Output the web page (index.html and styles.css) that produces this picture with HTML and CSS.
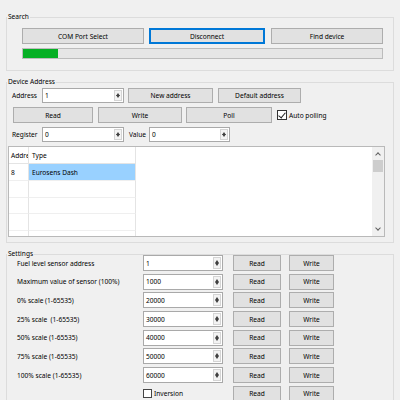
FILE: index.html
```html
<!DOCTYPE html>
<html lang="en">
<head>
    <meta charset="UTF-8">
    <meta name="viewport" content="width=device-width, initial-scale=1.0">
    <title>Sensor Configurator</title>
    <link rel="stylesheet" href="styles.css">
</head>
<body>
    <div class="window">
        <fieldset class="group search">
            <legend>Search</legend>
            <div class="search-body">
                <div class="row">
                    <button class="btn w-com">COM Port Select</button>
                    <button class="btn w-disc focused">Disconnect</button>
                    <button class="btn w-find">Find device</button>
                </div>
                <div class="progress"><div class="progress-fill" style="width: 35px"></div></div>
            </div>
        </fieldset>

        <fieldset class="group device">
            <legend>Device Address</legend>
            <div class="device-body">
                <div class="row">
                    <span class="label w-lbl">Address</span>
                    <div class="spin w-addr"><span>1</span><div class="arrows"></div></div>
                    <button class="btn w-new">New address</button>
                    <button class="btn w-def">Default address</button>
                </div>
                <div class="row row-actions">
                    <button class="btn w-read">Read</button>
                    <button class="btn w-write">Write</button>
                    <button class="btn w-poll">Poll</button>
                    <label class="check"><span class="box checked"></span>Auto polling</label>
                </div>
                <div class="row row-reg">
                    <span class="label w-lbl">Register</span>
                    <div class="spin w-addr"><span>0</span><div class="arrows"></div></div>
                    <span class="label w-val">Value</span>
                    <div class="spin w-value"><span>0</span><div class="arrows"></div></div>
                </div>
                <div class="table">
                    <div class="table-grid">
                        <div class="cell head c1">Addre</div>
                        <div class="cell head c2">Type</div>
                        <div class="cell c1">8</div>
                        <div class="cell c2 selected">Eurosens Dash</div>
                        <div class="cell c1"></div><div class="cell c2"></div>
                        <div class="cell c1"></div><div class="cell c2"></div>
                        <div class="cell c1"></div><div class="cell c2"></div>
                        <div class="cell c1 last"></div><div class="cell c2 last"></div>
                    </div>
                    <div class="scrollbar">
                        <span class="chev up"></span>
                        <span class="thumb"></span>
                        <span class="chev down"></span>
                    </div>
                </div>
            </div>
        </fieldset>

        <fieldset class="group settings">
            <legend>Settings</legend>
            <div class="settings-body">
                <span class="label">Fuel level sensor address</span>
                <div class="spin"><span>1</span><div class="arrows"></div></div>
                <button class="btn read">Read</button>
                <button class="btn write">Write</button>

                <span class="label">Maximum value of sensor (100%)</span>
                <div class="spin"><span>1000</span><div class="arrows"></div></div>
                <button class="btn read">Read</button>
                <button class="btn write">Write</button>

                <span class="label">0% scale (1-65535)</span>
                <div class="spin"><span>20000</span><div class="arrows"></div></div>
                <button class="btn read">Read</button>
                <button class="btn write">Write</button>

                <span class="label">25% scale&nbsp; (1-65535)</span>
                <div class="spin"><span>30000</span><div class="arrows"></div></div>
                <button class="btn read">Read</button>
                <button class="btn write">Write</button>

                <span class="label">50% scale (1-65535)</span>
                <div class="spin"><span>40000</span><div class="arrows"></div></div>
                <button class="btn read">Read</button>
                <button class="btn write">Write</button>

                <span class="label">75% scale (1-65535)</span>
                <div class="spin"><span>50000</span><div class="arrows"></div></div>
                <button class="btn read">Read</button>
                <button class="btn write">Write</button>

                <span class="label">100% scale (1-65535)</span>
                <div class="spin"><span>60000</span><div class="arrows"></div></div>
                <button class="btn read">Read</button>
                <button class="btn write">Write</button>

                <span class="label"></span>
                <label class="check"><span class="box"></span>Inversion</label>
                <button class="btn read">Read</button>
                <button class="btn write">Write</button>
            </div>
        </fieldset>
    </div>
</body>
</html>
```

FILE: styles.css
```css
body {
    margin: 0;
    background-color: #f0f0f0;
    font-family: "Noto Sans", "Liberation Sans", sans-serif;
    font-size: 6.6px;
    color: #000;
    overflow: hidden;
}

.window {
    padding: 12px 6px 0 6px;
}

.group {
    margin: 0;
    padding: 0;
    border: 1px solid #dcdcdc;
    min-width: 0;
}

.group legend {
    padding: 0 1px;
    margin-left: 0;
    line-height: 10px;
    height: 10px;
}

.device,
.settings {
    margin-top: 6px;
}

.row {
    display: flex;
    align-items: center;
}

.btn {
    height: 16px;
    margin: 0;
    padding: 0;
    background-color: #e1e1e1;
    border: 1px solid #adadad;
    font: inherit;
    color: #000;
    box-sizing: border-box;
    cursor: pointer;
}

.btn.focused {
    border-color: #0078d7;
    box-shadow: inset 0 0 0 1px #0078d7;
}

.label {
    white-space: nowrap;
}

/* search */
.search-body {
    padding: 6px 10px 11px 15px;
}

.w-com { width: 122px; }
.w-disc { width: 116px; margin-left: 5px; }
.w-find { width: 112px; margin-left: 6px; }

.progress {
    margin-top: 4px;
    height: 11px;
    border: 1px solid #bcbcbc;
    background-color: #e6e6e6;
    box-sizing: border-box;
}

.progress-fill {
    height: 100%;
    background-color: #06b025;
}

/* device address */
.device-body {
    padding: 1px 9px 5px 5px;
}

.w-lbl { width: 30px; }
.w-addr { width: 82px; }
.w-new { width: 85px; margin-left: 4px; height: 15px; }
.w-def { width: 83px; margin-left: 5px; height: 15px; }
.w-val { width: 20px; margin-left: 5px; }
.w-value { width: 81px; }

.row-actions {
    margin-top: 4px;
}

.w-read { width: 80px; margin-left: 1px; }
.w-write { width: 84px; margin-left: 5px; }
.w-poll { width: 86px; margin-left: 4px; }

.row-actions .check {
    margin-left: 5px;
}

.row-reg {
    margin-top: 4px;
}

.spin {
    position: relative;
    height: 15px;
    background-color: #fff;
    border: 1px solid #a9a9a9;
    box-sizing: border-box;
    display: flex;
    align-items: center;
    padding-left: 2px;
}

.arrows {
    position: absolute;
    right: 1px;
    top: 1px;
    bottom: 1px;
    width: 8px;
    background-color: #f3f3f3;
    border: 1px solid #d4d4d4;
    box-sizing: border-box;
}

.arrows::before,
.arrows::after {
    content: "";
    position: absolute;
    left: 1px;
    border-left: 2px solid transparent;
    border-right: 2px solid transparent;
}

.arrows::before {
    top: 2px;
    border-bottom: 3px solid #404040;
}

.arrows::after {
    bottom: 2px;
    border-top: 3px solid #404040;
}

.check {
    display: flex;
    align-items: center;
    white-space: nowrap;
}

.box {
    position: relative;
    width: 10px;
    height: 10px;
    border: 1px solid #333;
    background-color: #fff;
    box-sizing: border-box;
    margin-right: 2px;
}

.box.checked::after {
    content: "";
    position: absolute;
    left: 2px;
    top: 0;
    width: 3px;
    height: 6px;
    border-right: 1px solid #222;
    border-bottom: 1px solid #222;
    transform: rotate(40deg);
}

/* table */
.table {
    margin: 4px 0 0 -4px;
    height: 91px;
    width: 377px;
    border: 1px solid #b9b9b9;
    background-color: #fff;
    box-sizing: border-box;
    display: flex;
}

.table-grid {
    flex: 1;
    display: grid;
    grid-template-columns: 20px 107px;
    grid-template-rows: 17px 17px 17px 16px 17px 5px;
    align-content: start;
}

.cell {
    border-bottom: 1px solid #efefef;
    border-right: 1px solid #e4e4e4;
    padding-left: 2px;
    display: flex;
    align-items: center;
    overflow: hidden;
    white-space: nowrap;
    box-sizing: border-box;
}

.cell.head {
    border-bottom-color: #e4e4e4;
}

.cell.c2 {
    padding-left: 3px;
}

.cell.last {
    border-bottom: none;
}

.cell.selected {
    background-color: #99d1ff;
}

.scrollbar {
    width: 12px;
    background-color: #f0f0f0;
    display: flex;
    flex-direction: column;
    align-items: center;
}

.chev {
    width: 3px;
    height: 3px;
    border-left: 1px solid #606060;
    border-top: 1px solid #606060;
}

.chev.up {
    margin-top: 6px;
    transform: rotate(45deg);
}

.chev.down {
    margin-top: auto;
    margin-bottom: 6px;
    transform: rotate(225deg);
}

.thumb {
    margin-top: 3px;
    width: 10px;
    height: 12px;
    background-color: #cdcdcd;
}

/* settings */
.settings-body {
    margin-top: -4px;
    padding-left: 10px;
    display: grid;
    grid-template-columns: 126px 80px 58px 53px;
    grid-auto-rows: 16px;
    row-gap: 2.7px;
    align-items: center;
}

.settings-body .spin {
    height: 16px;
}

.settings-body .read {
    margin-left: 10px;
    width: 48px;
}

.settings-body .write {
    margin-left: 8px;
    width: 45px;
}

.settings-body .check .box {
    width: 9px;
    height: 9px;
    border-color: #444;
    margin-right: 2px;
}
```
